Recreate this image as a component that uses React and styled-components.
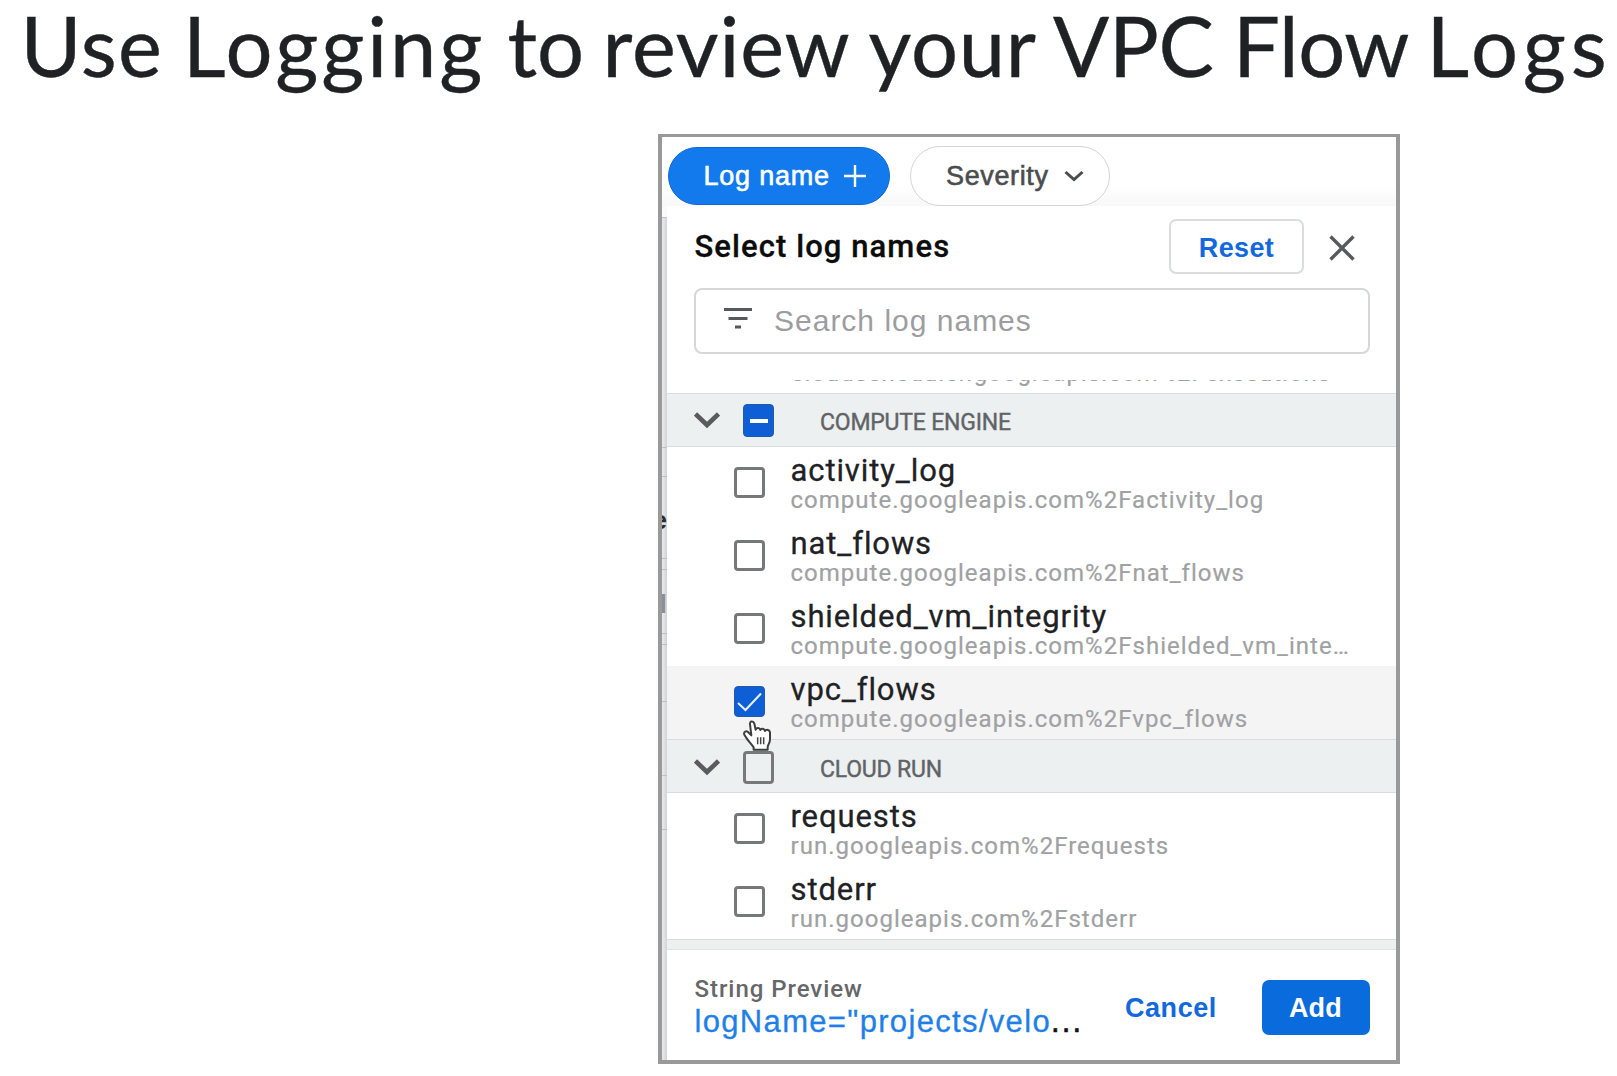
import React from "react";
import styled, { createGlobalStyle } from "styled-components";

const Global = createGlobalStyle`
  *, *::before, *::after { box-sizing: border-box; }
  body { margin: 0; background: #fff; }
  button { font: inherit; padding: 0; margin: 0; background: none; border: 0; }
`;

const sans = `"Liberation Sans", Arial, sans-serif`;
const roboto = `Roboto, "Liberation Sans", sans-serif`;

const Page = styled.main`
  width: 1617px;
  height: 1076px;
  background: #fff;
`;

const Title = styled.h1`
  display: flex;
  margin: 0;
  height: 134px;
  padding-left: 20.5px;
  font: 400 83px/91px Lato, ${sans};
  color: #202124;
  white-space: nowrap;
  -webkit-text-stroke: 0.4px #202124;
`;

const Word = styled.span`
  flex: none;
  width: ${(p) => p.$width}px;
  letter-spacing: ${(p) => p.$track}px;
`;

const Frame = styled.section`
  display: flex;
  flex-direction: column;
  width: 742px;
  height: 930px;
  margin-left: 658px;
  border: 4px solid #999;
  border-top-width: 3px;
  background: #fff;
  overflow: hidden;
`;

const FilterBar = styled.div`
  display: flex;
  flex: none;
  align-items: center;
  gap: 20px;
  height: 69px;
  padding: 9px 0 0 6px;
  background: linear-gradient(#fff 70%, #f8f8f8);
`;

const Pill = styled.button`
  display: flex;
  align-items: center;
  width: ${(p) => p.$width}px;
  height: ${(p) => (p.$active ? 58 : 60)}px;
  padding-left: ${(p) => (p.$active ? 34.5 : 35)}px;
  border-radius: 30px;
  border: ${(p) => (p.$active ? "1px solid #1268cf" : "1.5px solid #d4d4d6")};
  background: ${(p) => (p.$active ? "#137aed" : "#fff")};
  color: ${(p) => (p.$active ? "#fff" : "#4b4c4e")};
  font: 400 27px/30px ${sans};
  letter-spacing: ${(p) => (p.$active ? 0.78 : 0.64)}px;
  -webkit-text-stroke: 0.6px currentColor;
  svg { margin-left: ${(p) => (p.$active ? 14 : 15)}px; flex: none; }
`;

const Body = styled.div`
  display: flex;
  flex: 1;
  min-height: 0;
`;

const Sliver = styled.div`
  width: 5px;
  flex: none;
  overflow: hidden;
  background: linear-gradient(90deg, #e9eaec, #d3d4d6);
`;

const SliverCell = styled.div`
  display: flex;
  justify-content: flex-end;
  align-items: center;
  height: ${(p) => p.$height}px;
  padding-top: 4px;
  overflow: hidden;
  border-bottom: 1px solid #bfc1c4;
  background: ${(p) => (p.$blank ? "#fafafa" : "transparent")};
  color: ${(p) => p.$color || "inherit"};
  font: 700 26px/28px ${sans};
`;

const Panel = styled.div`
  display: flex;
  flex-direction: column;
  flex: 1;
  min-width: 0;
  border-radius: 8px 8px 0 0;
  background: #fff;
`;

const Header = styled.header`
  display: flex;
  align-items: flex-start;
  flex: none;
  height: 82px;
  padding: 13px 41px 0 27.5px;
`;

const Heading = styled.h2`
  flex: 1;
  margin: 0;
  padding-top: 9px;
  font: 500 31px/38px ${roboto};
  letter-spacing: 1.08px;
  color: #0c0c0d;
  -webkit-text-stroke: 0.3px #0c0c0d;
`;

const Button = styled.button`
  flex: none;
  width: ${(p) => p.$width}px;
  height: 55px;
  padding-top: ${(p) => (p.$outlined ? 2 : 0)}px;
  border-radius: 7px;
  border: ${(p) => (p.$outlined ? "2px solid #dadcdf" : "0")};
  background: ${(p) => (p.$filled ? "#0a6bdd" : "transparent")};
  color: ${(p) => (p.$filled ? "#fff" : "#1268dc")};
  font: 700 27px/30px ${sans};
  letter-spacing: ${(p) => p.$track}px;
`;

const CloseIcon = styled.svg`
  flex: none;
  margin: 16px 0 0 25px;
`;

const Search = styled.div`
  display: flex;
  align-items: center;
  flex: none;
  height: 66px;
  margin: 0 26.5px 26px 27px;
  padding-left: 28px;
  border: 2px solid #d6d7d9;
  border-radius: 8px;
  color: #9c9da0;
  font: 400 30px/34px ${sans};
  letter-spacing: 1px;
  svg { margin: -6px 22px 0 0; }
`;

const List = styled.div`
  flex: none;
  height: 571px;
  overflow: hidden;
`;

const Clipped = styled.div`
  display: flex;
  flex-direction: column;
  justify-content: flex-end;
  height: 13px;
  padding: 0 0 7px 124px;
  overflow: hidden;
`;

const Group = styled.div`
  display: flex;
  align-items: center;
  height: 54.2px;
  padding: 1.5px 0 0 27px;
  background: #ecf0f1;
  border-top: 1.5px solid #d9dcdd;
  border-bottom: 1.5px solid #d9dcdd;
  color: #606366;
  font: 400 23px/28px ${roboto};
  letter-spacing: -0.2px;
  -webkit-text-stroke: 0.4px #606366;
  svg { flex: none; }
`;

const Strip = styled.div`
  height: 11px;
  background: #eef0f0;
  border-top: 1.5px solid #d9dcdd;
  border-bottom: 1.5px solid #dfe2e2;
`;

const GroupLabel = styled.span`
  margin: 5px 0 0 46px;
`;

const Box = styled.span`
  display: flex;
  align-items: center;
  justify-content: center;
  flex: none;
  width: 31px;
  height: ${(p) => (p.$tall ? 33 : 31)}px;
  margin-left: ${(p) => (p.$tall ? 23 : 0)}px;
  border-radius: 4px;
  border: ${(p) => (p.$on ? "1px solid #2259a8" : "3px solid #77787a")};
  background: ${(p) => (p.$on ? "#0e5fd6" : "transparent")};
`;

const Row = styled.div`
  position: relative;
  display: flex;
  gap: 25.5px;
  height: 73px;
  padding-left: 67px;
  background: ${(p) => (p.$selected ? "#f4f4f5" : "#fff")};
  > ${Box} { margin-top: 20px; }
`;

const RowText = styled.div`
  display: flex;
  flex-direction: column;
  min-width: 0;
  padding-top: 5px;
`;

const Name = styled.span`
  height: 34px;
  font: 400 31px/38px ${roboto};
  letter-spacing: 0.9px;
  color: #202124;
  white-space: nowrap;
  -webkit-text-stroke: 0.3px #202124;
`;

const Path = styled.span`
  flex: none;
  height: 27px;
  overflow: hidden;
  font: 400 24px/28px ${roboto};
  letter-spacing: ${(p) => p.$track ?? 1.02}px;
  color: #a0a1a3;
  white-space: nowrap;
  -webkit-text-stroke: 0.2px #a0a1a3;
`;

const Cursor = styled.svg`
  position: absolute;
  z-index: 1;
  left: 75px;
  top: 54px;
`;

const Footer = styled.footer`
  display: flex;
  flex: 1;
  padding: 29px 26.5px 0 27.5px;
`;

const Preview = styled.div`
  display: flex;
  flex-direction: column;
  width: 430.5px;
  flex: none;
`;

const PreviewLabel = styled.span`
  height: 28px;
  margin-top: -5px;
  font: 500 24px/28px ${roboto};
  letter-spacing: 0.95px;
  color: #666769;
`;

const PreviewValue = styled.span`
  margin-top: 1px;
  font: 400 31px/36px ${sans};
  letter-spacing: 1.33px;
  color: #1f7fe8;
  white-space: nowrap;
  -webkit-text-stroke: 0.3px #1f7fe8;
`;

const Dots = styled.span`
  margin-left: 0;
  letter-spacing: 2.1px;
  color: #111;
  -webkit-text-stroke: 0.6px #111;
`;

const FooterActions = styled.div`
  display: flex;
  flex: 1;
  justify-content: space-between;
`;

const Chevron = () => (
  <svg width="26" height="17" viewBox="0 0 26 17" fill="none" stroke="#595b5e" strokeWidth="4.6">
    <path d="M1.5 2 L13 13 L24.5 2" />
  </svg>
);

const Hand = () => (
  <Cursor width="30" height="31" viewBox="-3 -2 88 93">
    <path
      d="M20 10C19 1 30 0 33 9L37 27C39 20 49 20 51 28C54 22 63 23 65 31C69 25 79 27 80 35V56C80 66 75 70 73 79V87H31V80C24 70 16 62 10 53L3 42C0 34 8 29 14 34L24 44Z"
      fill="#fff"
      stroke="#3d3d3d"
      strokeWidth="6"
      strokeLinejoin="round"
    />
    <path d="M43 50V71M52 50V71M61 50V71" stroke="#444" strokeWidth="4.5" />
  </Cursor>
);

const words = [
  ["Use", 162.5, 1.2],
  ["Logging", 324.5, 2.9],
  ["to", 95, 0],
  ["review", 266, 0.9],
  ["your", 184.5, 0.8],
  ["VPC", 180, -0.3],
  ["Flow", 193.5, -0.3],
  ["Logs", 190, 4.9],
];

const cells = [
  { h: 12, blank: true },
  { h: 230 },
  { h: 29 },
  { h: 82, text: "e", color: "#2b2b2d" },
  { h: 11 },
  { h: 64, text: "d", color: "#8e8f92" },
  { h: 11 },
  { h: 57 },
  { h: 74 },
  { h: 54 },
];

const compute = [
  ["activity_log", "compute.googleapis.com%2Factivity_log"],
  ["nat_flows", "compute.googleapis.com%2Fnat_flows"],
  ["shielded_vm_integrity", "compute.googleapis.com%2Fshielded_vm_inte…"],
  ["vpc_flows", "compute.googleapis.com%2Fvpc_flows", true],
];

const run = [
  ["requests", "run.googleapis.com%2Frequests"],
  ["stderr", "run.googleapis.com%2Fstderr"],
];

const LogRow = ({ name, path, selected }) => (
  <Row $selected={selected}>
    <Box $on={selected}>
      {selected && (
        <svg width="27" height="22" viewBox="0 0 27 22" fill="none" stroke="#e8f1ff" strokeWidth="2">
          <path d="M2 12 L9.5 19 L25 2.5" />
        </svg>
      )}
    </Box>
    <RowText>
      <Name>{name}</Name>
      <Path>{path}</Path>
    </RowText>
    {selected && <Hand />}
  </Row>
);

export default function App() {
  return (
    <Page>
      <Global />
      <Title>
        {words.map(([text, width, track]) => (
          <Word key={text} $width={width} $track={track}>{text + " "}</Word>
        ))}
      </Title>
      <Frame>
        <FilterBar>
          <Pill $active $width={222}>
            Log name
            <svg width="22" height="22" viewBox="0 0 22 22" stroke="#fff" strokeWidth="2.4">
              <path d="M11 0V22M0 11H22" />
            </svg>
          </Pill>
          <Pill $width={200}>
            Severity
            <svg width="20" height="12" viewBox="0 0 20 12" fill="none" stroke="#4b4c4e" strokeWidth="3">
              <path d="M1.5 2 L10 9.5 L18.5 2" />
            </svg>
          </Pill>
        </FilterBar>
        <Body>
          <Sliver>
            {cells.map((c, i) => (
              <SliverCell key={i} $height={c.h} $blank={c.blank} $color={c.color}>{c.text}</SliverCell>
            ))}
          </Sliver>
          <Panel>
            <Header>
              <Heading>Select log names</Heading>
              <Button $outlined $width={135} $track={0.36}>Reset</Button>
              <CloseIcon width="26" height="26" viewBox="0 0 26 26" stroke="#58595b" strokeWidth="3.4">
                <path d="M1.5 1.5 L24.5 24.5 M24.5 1.5 L1.5 24.5" />
              </CloseIcon>
            </Header>
            <Search>
              <svg width="28" height="21" viewBox="0 0 28 21" stroke="#58595b" strokeWidth="2.8">
                <path d="M0 1.5H28M4.5 10.5H23.5M11 19H17" />
              </svg>
              Search log names
            </Search>
            <List>
              <Clipped>
                <Path $track={0.97}>cloudscheduler.googleapis.com%2Fexecutions</Path>
              </Clipped>
              <Group>
                <Chevron />
                <Box $tall $on>
                  <svg width="18" height="4" viewBox="0 0 18 4"><rect width="18" height="4" fill="#fff" /></svg>
                </Box>
                <GroupLabel>COMPUTE ENGINE</GroupLabel>
              </Group>
              {compute.map(([n, p, s]) => <LogRow key={n} name={n} path={p} selected={s} />)}
              <Group>
                <Chevron />
                <Box $tall />
                <GroupLabel>CLOUD RUN</GroupLabel>
              </Group>
              {run.map(([n, p]) => <LogRow key={n} name={n} path={p} />)}
              <Strip />
            </List>
            <Footer>
              <Preview>
                <PreviewLabel>String Preview</PreviewLabel>
                <PreviewValue>logName="projects/velo<Dots>...</Dots></PreviewValue>
              </Preview>
              <FooterActions>
                <Button $width={91} $track={0.55}>Cancel</Button>
                <Button $filled $width={108} $track={0.25}>Add</Button>
              </FooterActions>
            </Footer>
          </Panel>
        </Body>
      </Frame>
    </Page>
  );
}
